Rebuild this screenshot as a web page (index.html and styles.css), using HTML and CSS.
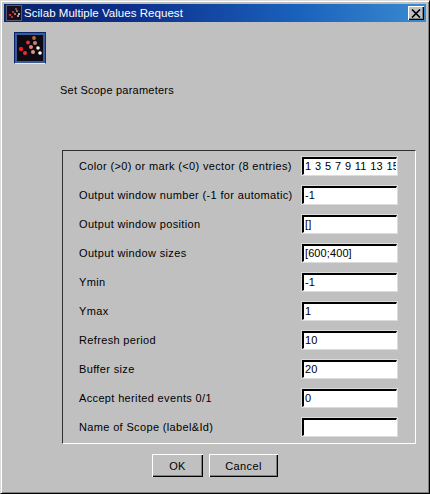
FILE: index.html
```html
<!DOCTYPE html>
<html lang="en">
<head>
<meta charset="utf-8">
<title>Scilab Multiple Values Request</title>
<link rel="stylesheet" href="styles.css">
</head>
<body>
<div class="window">
  <div class="titlebar">
    <svg class="title-icon" width="16" height="16" viewBox="0 0 16 16">
      <rect width="16" height="16" fill="#5a5a78"/>
      <rect x="1" y="1" width="14" height="14" fill="#14101c"/>
      <circle cx="4" cy="10" r="1.3" fill="#e02030"/>
      <circle cx="6" cy="12" r="1.1" fill="#d83038"/>
      <circle cx="7" cy="7" r="1.1" fill="#d84040"/>
      <circle cx="9" cy="9" r="1.1" fill="#d88070"/>
      <circle cx="11" cy="6" r="1.1" fill="#c08060"/>
      <circle cx="10" cy="4" r="1" fill="#a06040"/>
      <circle cx="13" cy="9" r="1" fill="#f0e0e0"/>
      <circle cx="12" cy="11" r="1.1" fill="#e0b0b0"/>
    </svg>
    <span class="title-text">Scilab Multiple Values Request</span>
    <button class="close" type="button" aria-label="Close">
      <svg width="10" height="9" viewBox="0 0 10 9"><path d="M1 0.5 L9 8.5 M9 0.5 L1 8.5" stroke="#000" stroke-width="1.7" fill="none"/></svg>
    </button>
  </div>
  <div class="content">
    <div class="logo">
      <svg width="26" height="26" viewBox="0 0 26 26">
        <rect width="26" height="26" fill="#0e0a12"/>
        <circle cx="17" cy="3" r="1.9" fill="#b86a40"/>
        <circle cx="11" cy="7.5" r="2" fill="#e03038"/>
        <circle cx="18" cy="8" r="2" fill="#c88868"/>
        <circle cx="4" cy="14" r="2.2" fill="#f01828"/>
        <circle cx="14" cy="12" r="2" fill="#e08078"/>
        <circle cx="21" cy="13" r="1.8" fill="#f4ecec"/>
        <circle cx="8" cy="18" r="2" fill="#e83038"/>
        <circle cx="16" cy="17" r="2" fill="#d89888"/>
        <circle cx="23" cy="18" r="1.8" fill="#ffffff"/>
      </svg>
    </div>
    <p class="heading">Set Scope parameters</p>
    <div class="panel">
      <div class="row"><label>Color (&gt;0) or mark (&lt;0) vector (8 entries)</label><div class="field">1 3 5 7 9 11 13 15</div></div>
      <div class="row"><label>Output window number (-1 for automatic)</label><div class="field">-1</div></div>
      <div class="row"><label>Output window position</label><div class="field">[]</div></div>
      <div class="row"><label>Output window sizes</label><div class="field">[600;400]</div></div>
      <div class="row"><label>Ymin</label><div class="field">-1</div></div>
      <div class="row"><label>Ymax</label><div class="field">1</div></div>
      <div class="row"><label>Refresh period</label><div class="field">10</div></div>
      <div class="row"><label>Buffer size</label><div class="field">20</div></div>
      <div class="row"><label>Accept herited events 0/1</label><div class="field">0</div></div>
      <div class="row"><label>Name of Scope (label&amp;Id)</label><div class="field"></div></div>
    </div>
    <div class="actions">
      <button class="btn btn-ok" type="button">OK</button>
      <button class="btn btn-cancel" type="button">Cancel</button>
    </div>
  </div>
</div>
</body>
</html>
```

FILE: styles.css
```css
* { box-sizing: border-box; }
html, body { margin: 0; padding: 0; }
body {
  width: 430px;
  height: 494px;
  overflow: hidden;
  background: #c0c0c0;
  font-family: "Liberation Sans", Arial, sans-serif;
  font-size: 11px;
  color: #000;
}
.window {
  width: 430px;
  height: 494px;
  background: #c0c0c0;
  border-top: 1px solid #dcdcdc;
  border-left: 1px solid #dcdcdc;
  border-right: 1px solid #000;
  border-bottom: 1px solid #000;
  box-shadow: inset 1px 1px 0 #fff, inset -1px -1px 0 #808080;
  padding: 3px;
  display: flex;
  flex-direction: column;
}
.titlebar {
  height: 18px;
  flex: none;
  display: flex;
  align-items: center;
  background: linear-gradient(90deg, #0a246a 0%, #0c2f8c 30%, #1a62bc 70%, #3a8ad0 100%);
  color: #fff;
  padding: 0 2px;
}
.title-icon { flex: none; }
.title-text {
  margin-left: 2px;
  font-size: 11.5px;
  letter-spacing: 0.04px;
  line-height: 18px;
  flex: 1;
}
.close {
  width: 16px;
  height: 14px;
  padding: 0;
  background: #c0c0c0;
  border: 0;
  box-shadow: inset 1px 1px 0 #fff, inset -1px -1px 0 #000, inset -2px -2px 0 #808080;
  display: flex;
  align-items: center;
  justify-content: center;
}
.content {
  flex: 1;
  display: flex;
  flex-direction: column;
  padding: 10px 11px 0 10px;
}
.logo {
  width: 32px;
  height: 32px;
  background: #c0d0e8;
  border: 1px solid #0a246a;
  border-right-color: #20304a;
  border-bottom-color: #e8e8f8;
  padding: 2px;
  box-shadow: inset 0 0 0 2px #3a5a98;
}
.logo svg { display: block; }
.heading {
  margin: 19px 0 0 46px;
  height: 14px;
  line-height: 14px;
  font-size: 11px;
  letter-spacing: 0.22px;
}
.panel {
  margin: 53px 0 0 48px;
  width: 354px;
  height: 294px;
  border-top: 1px solid #303030;
  border-left: 1px solid #303030;
  border-right: 1px solid #fff;
  border-bottom: 1px solid #fff;
  padding: 0 18px 0 16px;
  display: flex;
  flex-direction: column;
}
.row {
  height: 29px;
  flex: none;
  display: flex;
  align-items: center;
  justify-content: space-between;
}
.row label {
  white-space: nowrap;
  letter-spacing: 0.35px;
}
.field {
  width: 95px;
  height: 18px;
  flex: none;
  background: #fff;
  border-top: 2px solid #000;
  border-left: 2px solid #000;
  border-right: 1px solid #fff;
  border-bottom: 1px solid #fff;
  outline: 1px solid #dcdcdc;
  padding: 0 0 0 1px;
  font-size: 11px;
  line-height: 15px;
  letter-spacing: 0.1px;
  word-spacing: 0.6px;
  white-space: nowrap;
  overflow: hidden;
}
.actions {
  display: flex;
  gap: 6px;
  margin: 10px 0 0 138px;
}
.btn {
  height: 23px;
  padding: 0;
  background: #c0c0c0;
  border: 0;
  box-shadow: inset 1px 1px 0 #fff, inset -1px -1px 0 #000, inset -2px -2px 0 #808080;
  font-family: inherit;
  font-size: 11px;
  letter-spacing: 0.4px;
  color: #000;
}
.btn-ok { width: 51px; }
.btn-cancel { width: 69px; }
```
